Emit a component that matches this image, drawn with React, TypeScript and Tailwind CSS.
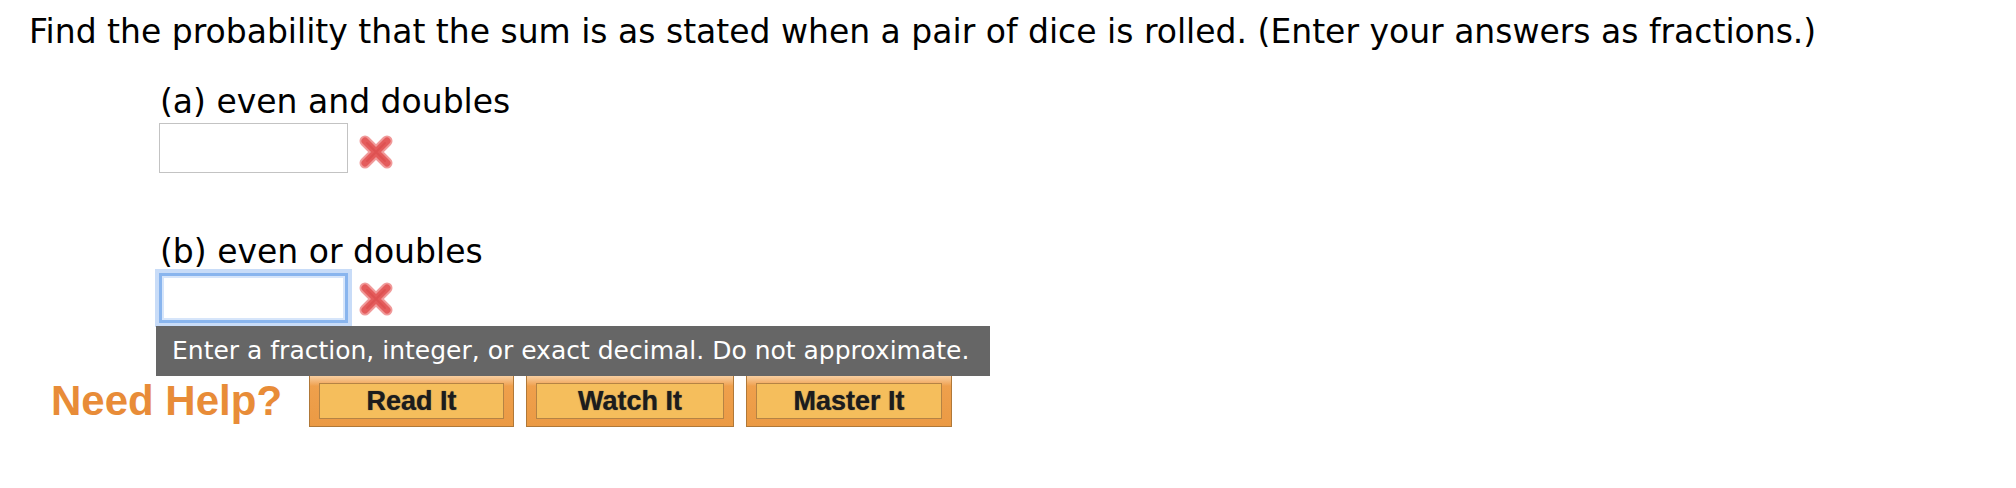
import React from 'react'

function RedX() {
  return (
    <svg width="36" height="36" viewBox="0 0 36 36" className="shrink-0">
      <g strokeLinecap="round">
        <path d="M7 7 L29 29 M29 7 L7 29" stroke="#f09a9a" strokeWidth="11" />
        <path d="M7 7 L29 29 M29 7 L7 29" stroke="#e45c5c" strokeWidth="7" />
        <path d="M9 9 L27 27 M27 9 L9 27" stroke="#d94848" strokeWidth="2" opacity="0.5" />
      </g>
    </svg>
  )
}

function HelpButton({ label, width }: { label: string; width: string }) {
  return (
    <div
      className={`${width} h-[52px] border border-[#b07838] bg-[#efa04c] bg-gradient-to-b from-[#f8cfa0] from-0% via-[#efa04c] via-20% to-[#eb9a44] px-[9px] py-[7px]`}
    >
      <div className="h-full border border-[#b58344] bg-[#f5be5c] flex items-center justify-center">
        <span
          className="font-bold text-[27px] text-[#1c1c1c] [text-shadow:0_0_1px_#444]"
          style={{ fontFamily: '"Liberation Sans", Arial, sans-serif' }}
        >
          {label}
        </span>
      </div>
    </div>
  )
}

export default function App() {
  const verdana = { fontFamily: '"DejaVu Sans", Verdana, sans-serif' }

  return (
    <div className="w-[2016px] h-[488px] bg-white text-black" style={verdana}>
      <p className="pt-[13px] pl-[29px] text-[33px] leading-[38px]">
        Find the probability that the sum is as stated when a pair of dice is rolled. (Enter your answers as fractions.)
      </p>

      <div className="pl-[159px]">
        <p className="mt-[32px] pl-[1px] text-[33px] leading-[38px]">(a) even and doubles</p>
        <div className="mt-[2px] flex items-center gap-[10px]">
          <div className="w-[189px] h-[50px] border border-[#c3c3c3] bg-white" />
          <div className="mt-[8px]">
            <RedX />
          </div>
        </div>

        <p className="mt-[60px] pl-[1px] text-[33px] leading-[38px]">(b) even or doubles</p>
        <div className="relative mt-[2px] flex items-center gap-[10px]">
          <div className="w-[189px] h-[50px] border-[3px] border-[#89b5ee] bg-white shadow-[0_0_0_4px_#c8dcf8,inset_0_0_0_2px_#d6e5fa]" />
          <div className="mt-[2px]">
            <RedX />
          </div>
          <div className="absolute left-[-3px] top-[53px] w-[834px] h-[50px] bg-[#666666] flex items-center pl-[16px] text-white text-[25px]">
            Enter a fraction, integer, or exact decimal. Do not approximate.
          </div>
        </div>
      </div>

      <div className="mt-[52px] pl-[51px] flex items-center">
        <span
          className="font-bold text-[42px] leading-none text-[#e88c38] mr-[27px]"
          style={{ fontFamily: '"Liberation Sans", Arial, sans-serif' }}
        >
          Need Help?
        </span>
        <div className="flex gap-[12px]">
          <HelpButton label="Read It" width="w-[205px]" />
          <HelpButton label="Watch It" width="w-[208px]" />
          <HelpButton label="Master It" width="w-[206px]" />
        </div>
      </div>
    </div>
  )
}
